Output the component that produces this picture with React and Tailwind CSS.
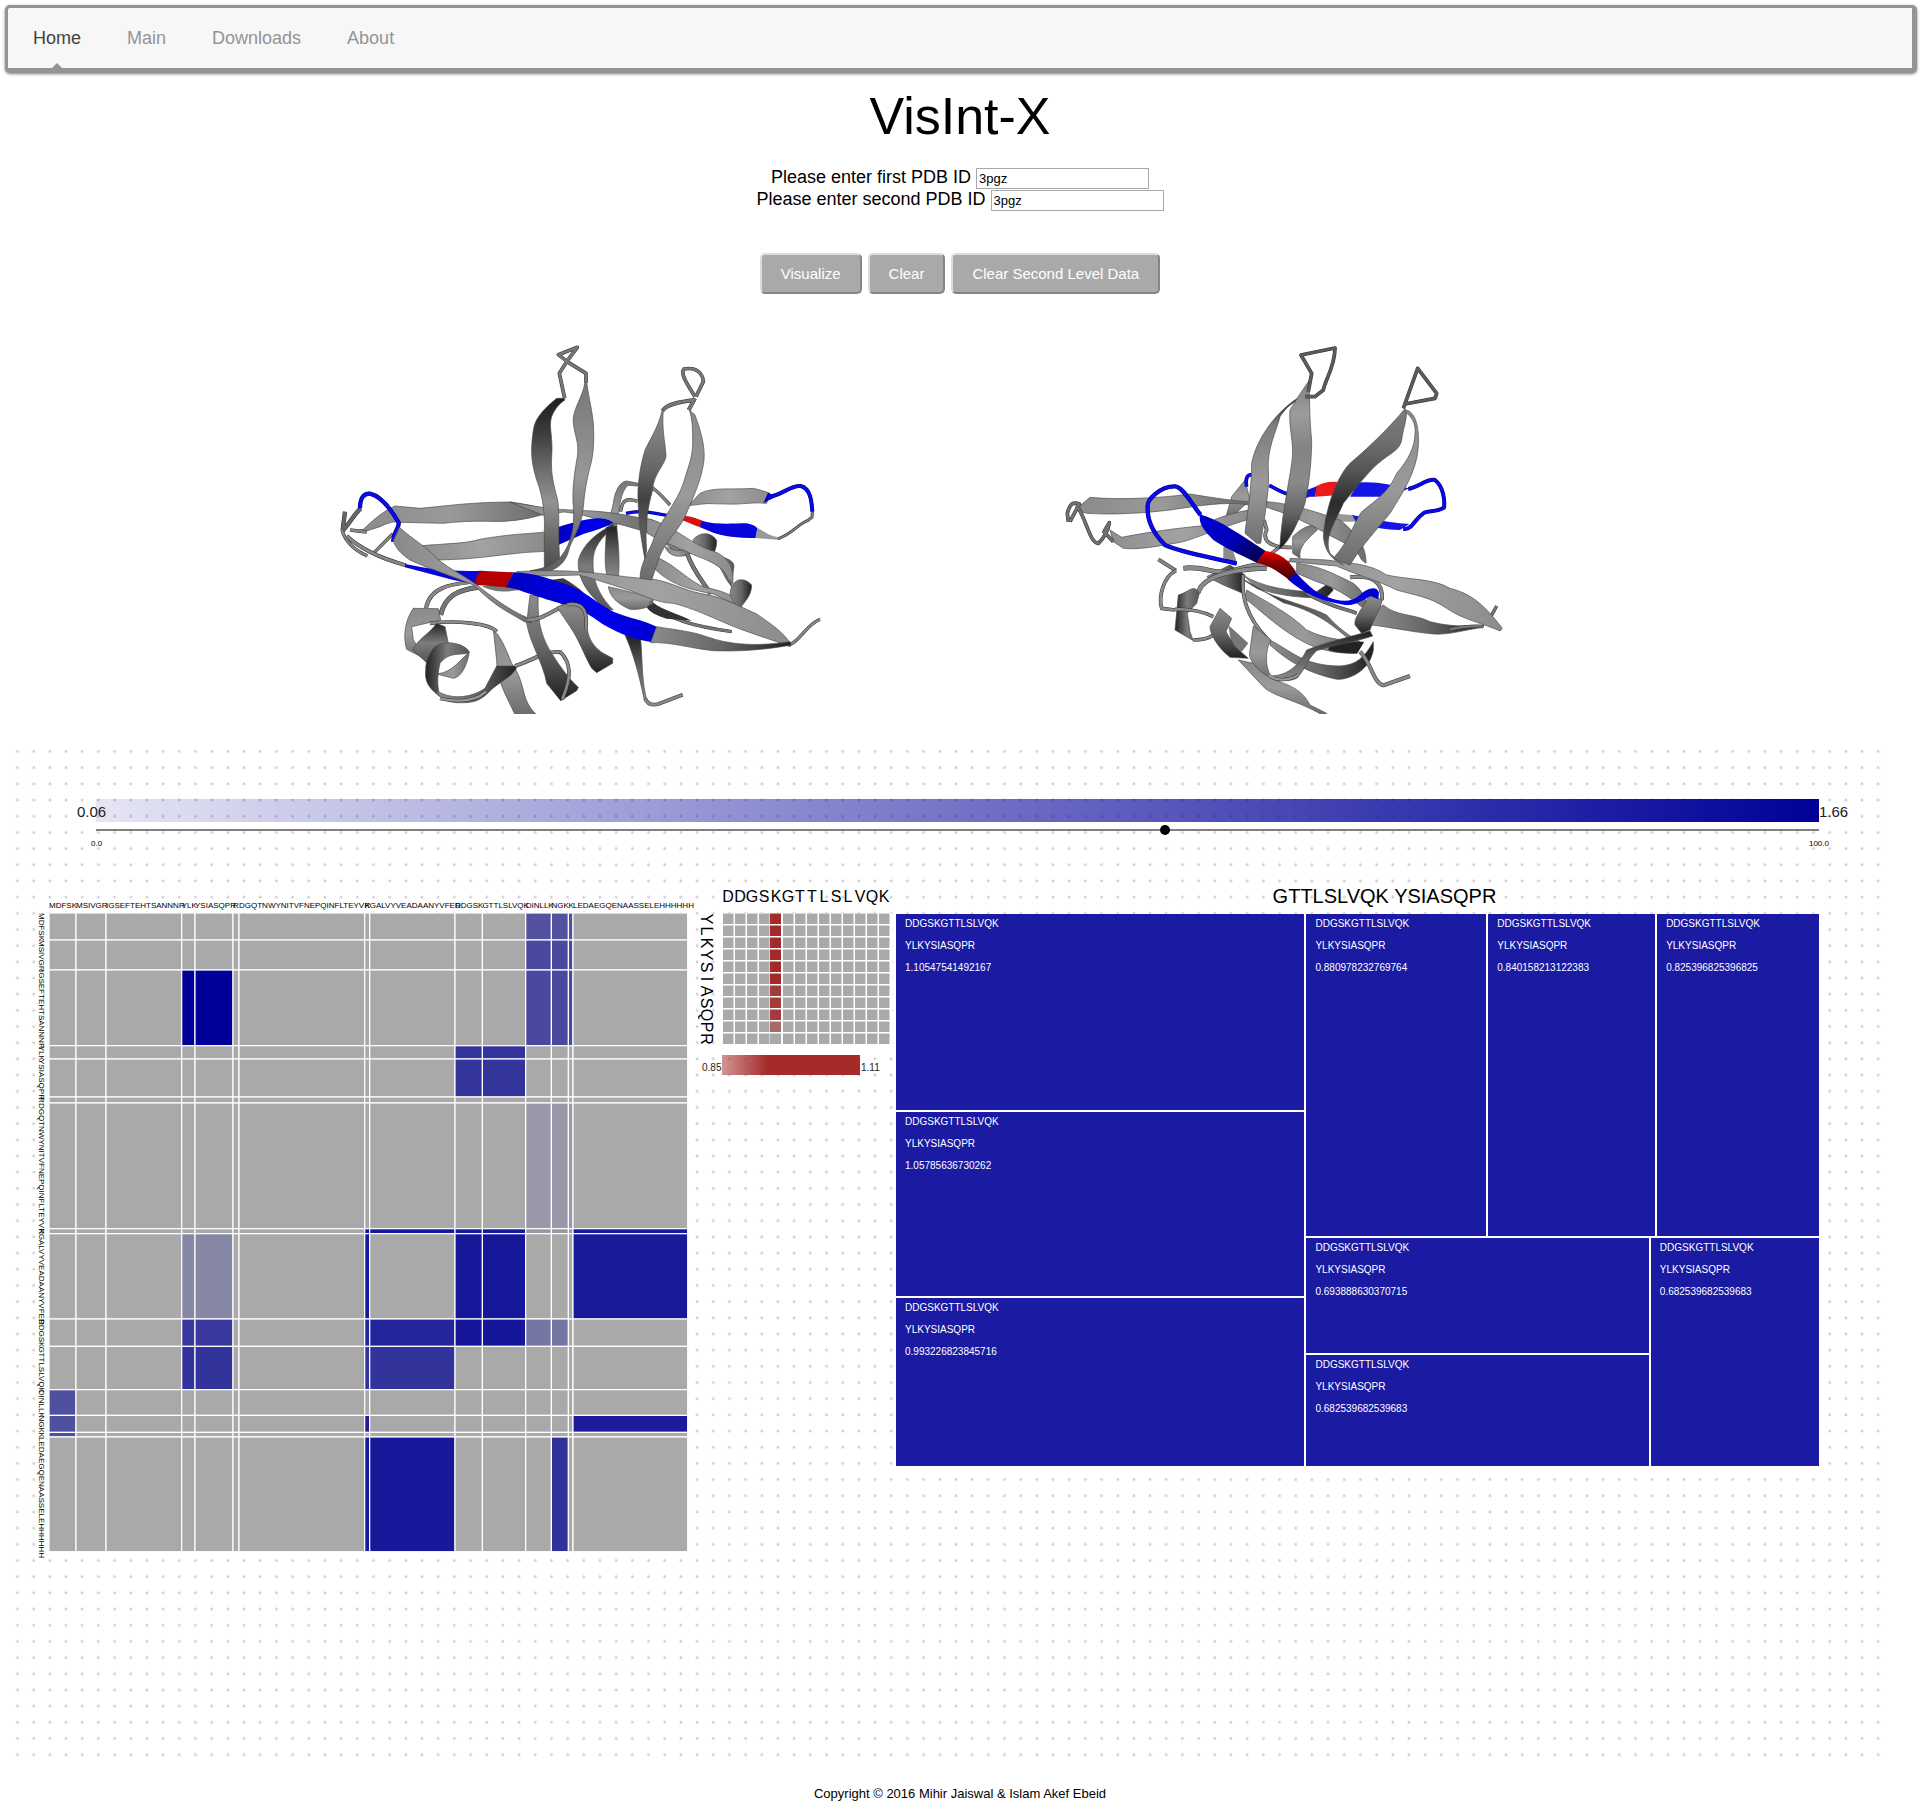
import { useState } from 'react';

const NAV = ['Home', 'Main', 'Downloads', 'About'];

/* ---------- peptide contact matrix ---------- */

const PEPTIDES = [
  'MDFSK', 'MSIVGR', 'IGSEFTEHTSANNNR', 'YLK', 'YSIASQPR', 'R', 'DGQTNWYNITVFNEPQINFLTEYVR', 'K',
  'GALVYVEADAANYVFER', 'DDGSK', 'GTTLSLVQK', 'DINLLK', 'NGK', 'K', 'LEDAEGQENAASSELEHHHHHH',
];
const EDGES = [0, 27, 57, 132.7, 146, 184, 190, 315.7, 320.7, 406, 433.4, 476.7, 502.4, 519.4, 524, 638.7];

// row -> { column: colour }
const CONTACTS = {
  0: { 11: '#5252a0', 12: '#5252a0', 13: '#5252a0' },
  1: { 11: '#49499f', 12: '#49499f', 13: '#49499f' },
  2: { 3: '#000099', 4: '#000099', 11: '#49499f', 12: '#49499f', 13: '#49499f' },
  3: { 9: '#34349d', 10: '#34349d' },
  4: { 9: '#34349d', 10: '#34349d' },
  6: { 11: '#9a98a8', 12: '#9a98a8', 13: '#9a98a8' },
  7: { 7: '#17179a', 8: '#17179a', 9: '#17179a', 10: '#17179a', 11: '#9a98a8', 12: '#9a98a8', 13: '#9a98a8', 14: '#19199a' },
  8: { 3: '#8686a5', 4: '#8686a5', 7: '#17179a', 9: '#17179a', 10: '#17179a', 14: '#19199a' },
  9: { 3: '#38389d', 4: '#38389d', 7: '#25259b', 8: '#25259b', 9: '#16169a', 10: '#16169a', 11: '#7676a5', 12: '#7676a5' },
  10: { 3: '#33339c', 4: '#33339c', 7: '#33339c', 8: '#33339c' },
  11: { 0: '#5050a0' },
  12: { 0: '#5050a0', 7: '#1c1c9a', 14: '#1c1c9a' },
  13: { 0: '#5050a0' },
  14: { 7: '#17179a', 8: '#17179a', 12: '#31319b' },
};

function PeptideMatrix() {
  return (
    <svg className="block shrink-0" width="664" height="684" role="img" aria-label="Peptide contact matrix">
      <g fontSize="8" fill="#000">
        {PEPTIDES.map((p, i) => (
          <text key={i} x={15 + EDGES[i]} y="24">{p}</text>
        ))}
        {PEPTIDES.map((p, i) => (
          <text key={i} transform={`translate(5 ${29 + EDGES[i]}) rotate(90)`}>{p}</text>
        ))}
      </g>
      <g transform="translate(15 29)" stroke="#fff" strokeWidth="1.2">
        {PEPTIDES.map((_, r) =>
          PEPTIDES.map((_, c) => (
            <rect
              key={`${r}-${c}`}
              x={EDGES[c]}
              y={EDGES[r]}
              width={EDGES[c + 1] - EDGES[c]}
              height={EDGES[r + 1] - EDGES[r]}
              fill={(CONTACTS[r] && CONTACTS[r][c]) || '#a9a9a9'}
            />
          ))
        )}
      </g>
    </svg>
  );
}

/* ---------- residue matrix ---------- */

const COLS = 'DDGSKGTTLSLVQK'.split('');
const ROWS = 'YLKYSIASQPR'.split('');
const RED = ['#a52a2a', '#a52a2a', '#a52a2a', '#a52a2a', '#a52a2a', '#a52a2a', '#a53a3a', '#a53a3a', '#a53a3a', '#a76a6a', '#a9a9a9'];

function ResidueMatrix() {
  return (
    <svg className="block shrink-0" width="195" height="200" role="img" aria-label="Residue contact matrix">
      <defs>
        <linearGradient id="brown">
          <stop offset="0" stopColor="#a52a2a" stopOpacity="0.5" />
          <stop offset="0.33" stopColor="#a52a2a" />
        </linearGradient>
      </defs>
      <g fontSize="16" fill="#000" textAnchor="middle">
        {COLS.map((l, i) => (
          <text key={i} x={30 + i * 12} y="18">{l}</text>
        ))}
        {ROWS.map((l, i) => (
          <text key={i} transform={`translate(3 ${35 + i * 12}) rotate(90)`}>{l}</text>
        ))}
      </g>
      <rect x="24" y="29" width="170" height="133" fill="#fff" />
      {ROWS.map((_, r) =>
        COLS.map((_, c) => (
          <rect
            key={`${r}-${c}`}
            x={25 + c * 12 - (c === 4 ? 1 : 0)}
            y={r * 12 + 29.5}
            width={c === 4 ? 11 : 10.5}
            height="10.5"
            fill={c === 4 ? RED[r] : '#a9a9a9'}
          />
        ))
      )}
      <rect x="24" y="171" width="138" height="20" fill="url(#brown)" />
      <g fontSize="10" fill="#222">
        <text x="4" y="187">0.85</text>
        <text x="163" y="187">1.11</text>
      </g>
    </svg>
  );
}

/* ---------- treemap ---------- */

function Tile({ value, className }) {
  return (
    <div className={`flex min-w-0 flex-col gap-[10px] bg-[#1a1aa3] pt-[4px] pl-[9px] text-[10px] leading-[12px] text-white ${className}`}>
      <span>DDGSKGTTLSLVQK</span>
      <span>YLKYSIASQPR</span>
      <span>{value}</span>
    </div>
  );
}

function Treemap() {
  return (
    <section className="mr-[67px] ml-[3px] min-w-0 flex-1">
      <h2 className="pl-[54px] text-center text-[20px] leading-[24px]">GTTLSLVQK YSIASQPR</h2>
      <div className="mt-[6px] flex h-[552px] gap-[2px] bg-white">
        <div className="flex flex-[408] flex-col gap-[2px]">
          <Tile value="1.10547541492167" className="flex-[192]" />
          <Tile value="1.05785636730262" className="flex-[180]" />
          <Tile value="0.993226823845716" className="flex-[164]" />
        </div>
        <div className="flex flex-[512] flex-col gap-[2px]">
          <div className="flex flex-[322] gap-[2px]">
            <Tile value="0.880978232769764" className="flex-[171]" />
            <Tile value="0.840158213122383" className="flex-[158]" />
            <Tile value="0.825396825396825" className="flex-[153]" />
          </div>
          <div className="flex flex-[228] gap-[2px]">
            <div className="flex flex-[342] flex-col gap-[2px]">
              <Tile value="0.693888630370715" className="flex-[111]" />
              <Tile value="0.682539682539683" className="flex-[107]" />
            </div>
            <Tile value="0.682539682539683" className="flex-[159]" />
          </div>
        </div>
      </div>
    </section>
  );
}

/* ---------- protein ribbons ---------- */

function Shades() {
  const stops = {
    mid: ['#8a8a8a', '#9a9a9a', '#6c6c6c'],
    light: ['#8e8e8e', '#a2a2a2', '#8c8c8c'],
    sink: ['#8c8c8c', '#666666', '#202020'],
    rise: ['#1e1e1e', '#606060', '#8c8c8c'],
    tall: ['#222222', '#7c7c7c', '#555555'],
    pale: ['#777777', '#989898', '#5c5c5c'],
    arm: ['#1c1c1c', '#3c3c3c', '#6a6a6a', '#929292', '#6a6a6a', '#4c4c4c'],
    waist: ['#8a8a8a', '#7c7c7c', '#666666', '#424242', '#5c5c5c', '#505050'],
    foot: ['#808080', '#9c9c9c', '#848484', '#8a8a8a', '#606060', '#141414'],
    bend: ['#7c7c7c', '#707070', '#545454', '#2c2c2c', '#444444', '#8a8a8a'],
    stem: ['#1c1c1c', '#7c7c7c', '#8c8c8c', '#9a9a9a', '#868686', '#707070'],
  };
  return (
    <defs>
      {Object.entries(stops).map(([id, cs]) =>
        ['v', 'h'].map((dir) => (
          <linearGradient key={id + dir} id={id + dir} x1="0" y1="0" x2={dir === 'h' ? '1' : '0'} y2={dir === 'v' ? '1' : '0'}>
            {cs.map((c, i) => (
              <stop key={i} offset={i / (cs.length - 1)} stopColor={c} />
            ))}
          </linearGradient>
        ))
      )}
      <linearGradient id="blueh">
        <stop offset="0" stopColor="#0000c0" />
        <stop offset="0.6" stopColor="#0000f0" />
        <stop offset="1" stopColor="#0000d0" />
      </linearGradient>
      <linearGradient id="bluedark" x1="0" y1="0" x2="1" y2="0.6">
        <stop offset="0" stopColor="#0000d8" />
        <stop offset="0.6" stopColor="#0000b8" />
        <stop offset="1" stopColor="#000060" />
      </linearGradient>
      <linearGradient id="reddark" x1="0.4" y1="0" x2="0.3" y2="1">
        <stop offset="0" stopColor="#ff0000" />
        <stop offset="0.4" stopColor="#8a0000" />
        <stop offset="1" stopColor="#400000" />
      </linearGradient>
    </defs>
  );
}

const BLUE = '#0a0ae6';

// [path, fill] is a flat ribbon; [path, colour, width] is a thin tube
function Ribbons({ parts }) {
  return parts.map(([d, paint, width], i) =>
    width ? (
      <g key={i} fill="none" strokeLinejoin="round">
        <path d={d} stroke={paint === BLUE ? '#000080' : '#333'} strokeWidth={width + 2} />
        <path d={d} stroke={paint} strokeWidth={width - 1} />
      </g>
    ) : (
      <path key={i} d={d} fill={paint} stroke={paint.startsWith('url(#') && !/blue|red/.test(paint) ? '#4a4a4a' : 'none'} strokeWidth="2" />
    )
  );
}

const LEFT = [
  ['M830,640 C832,590 840,560 850,520 C855,480 870,455 890,453 L925,460 L922,468 L895,466 C875,480 868,520 860,590Z', 'url(#palev)'],
  ['M872,545 C876,510 890,503 922,514', '#858585', 8],
  ['M965,472 C990,488 1005,510 1020,525', '#858585', 8],
  ['M850,582 C800,610 760,640 745,690 C740,750 780,800 830,838 L850,840 C800,790 785,740 790,680 C795,640 830,610 850,592Z', 'url(#tallv)'],
  ['M828,592 L860,588 C865,640 870,690 865,745 L830,735 C820,680 830,640 828,592Z', 'url(#risev)'],
  ['M835,770 C840,800 860,820 900,838 C940,840 965,830 970,810 L950,800 C920,790 880,780 835,770Z', 'url(#midv)'],
  ['M960,570 C1000,620 1010,660 1080,672', '#858585', 9],
  ['M1005,650 C1015,680 1050,685 1080,672 L1075,660 L1040,662Z', 'url(#midh)'],
  ['M1090,628 C1110,605 1145,605 1160,632 C1160,660 1150,675 1135,682 L1090,655Z', 'url(#sinkh)'],
  ['M1150,675 C1180,680 1212,690 1212,708 C1208,740 1205,750 1205,770 L1190,750Z', 'url(#tallh)'],
  ['M1072,672 C1090,725 1120,755 1142,792', '#787878', 11],
  ['M980,682 C1040,705 1090,770 1140,775 C1180,785 1230,800 1234,832 L1150,792 C1090,780 1030,770 975,718Z', 'url(#lighth)'],
  ['M1200,790 C1205,745 1240,738 1265,765 C1264,800 1245,812 1230,836 L1208,812Z', 'url(#sinkh)'],
  ['M960,815 C1010,870 1100,890 1205,905', '#777', 8],
  ['M970,820 C1000,840 1040,850 1085,872 L1010,866 C980,856 955,845 950,830Z', '#333'],
  // upper left strand
  ['M75,603 L100,598 C140,560 160,545 195,528 L270,535 L400,522 Q470,516 540,516 Q590,522 645,537 L645,552 Q560,578 480,574 Q400,572 340,580 L210,577 Q190,570 150,590 L100,606Z', 'url(#midh)'],
  ['M540,516 C600,525 640,536 720,540 C790,542 850,545 950,568 L960,610 C900,590 860,580 820,572 C780,562 740,548 700,546 L640,556Z', 'url(#midh)'],
  ['M950,565 C1020,580 1080,640 1140,660 C1190,675 1215,710 1208,760 L1195,748 C1180,705 1130,690 1080,670 C1040,648 1000,640 950,608Z', 'url(#lighth)'],
  // lower left strand
  ['M265,648 C350,640 400,642 450,628 C550,610 600,612 645,606 L645,664 C560,666 480,682 400,687 L325,690Z', 'url(#lighth)'],
  ['M683,592 C720,580 760,568 800,565 C830,565 840,572 850,578 C830,590 800,600 760,612 L683,646Z', 'url(#blueh)'],
  ['M888,550 C930,540 960,545 1050,564', BLUE, 8],
  ['M1045,555 C1080,558 1100,565 1117,572 L1111,592 C1090,585 1070,575 1045,566Z', '#d81010'],
  ['M1115,572 C1160,585 1200,580 1250,580 Q1275,585 1282,595 L1278,624 C1220,624 1180,618 1150,608 L1110,592Z', '#0606dc'],
  ['M1282,593 C1310,610 1330,625 1355,620 L1350,630 L1276,624Z', '#999'],
  ['M1345,626 C1390,610 1400,585 1432,572 L1446,562 L1447,545', '#7c7c7c', 7],
  ['M1075,527 L1110,490 C1150,470 1200,480 1270,475 Q1300,482 1320,490 L1310,520 C1270,515 1230,525 1190,522 Q1130,517 1075,527Z', 'url(#lighth)'],
  ['M1300,519 L1314,488 L1338,500Z', '#0000c0'],
  ['M1315,500 C1350,500 1380,465 1412,468 C1440,475 1445,510 1447,545', BLUE, 10],
  // left knot
  ['M45,545 L38,600 M92,535 C70,555 60,580 38,602', '#666', 11],
  ['M36,600 Q50,650 112,678', '#888', 8],
  ['M60,600 L110,606', '#888', 9],
  ['M130,670 Q160,640 188,612', '#888', 8],
  ['M50,618 C100,665 170,690 228,706', '#888', 10],
  ['M90,535 C90,505 100,490 120,491 C160,500 190,550 206,578 C208,600 188,605 190,635', BLUE, 11],
  // helix, lower left
  ['M430,755 C370,762 300,768 288,834', '#8a8a8a', 10],
  ['M445,772 C380,780 345,800 332,855', '#777', 13],
  ['M250,835 L325,836 L332,870 L245,890 L250,930 L292,990 L230,958 C218,920 225,870 250,835Z', 'url(#midv)'],
  ['M490,900 C510,915 525,950 545,1000 C590,1060 570,1110 620,1154 L555,1154 C525,1090 500,1050 500,990Z', 'url(#midv)'],
  ['M300,880 C380,870 480,880 500,905', '#8a8a8a', 9],
  ['M320,880 L345,890 L355,940 C330,950 310,960 290,998 L248,960 C260,930 300,910 320,880Z', 'url(#tallv)'],
  ['M418,966 C412,1000 398,1040 370,1045 L320,1032 L340,1028 C375,1015 390,990 418,966Z', 'url(#midh)'],
  ['M310,955 C340,925 405,940 418,966 C400,980 360,960 330,1000 C318,1050 325,1080 330,1100 C290,1070 285,1050 287,1020 C287,990 300,970 310,955Z', 'url(#tallh)'],
  ['M320,1082 C360,1108 420,1106 465,1075 L500,1008 L562,1008 C552,1040 500,1060 478,1085 C450,1113 430,1120 380,1118 C345,1115 328,1105 320,1082Z', 'url(#sinkh)'],
  ['M330,1106 C400,1120 440,1110 468,1085', '#9a9a9a', 8],
  ['M555,1008 C610,990 650,960 692,967', '#888', 10],
  // ribbons under the long strand
  ['M600,795 L625,798 C620,880 640,930 665,970 C690,1010 720,1050 745,1072 L740,1082 L692,1112 L650,1060 C640,1000 600,940 590,880Z', 'url(#sinkv)'],
  ['M690,965 C725,1000 725,1040 697,1108', '#8a8a8a', 9],
  ['M660,750 L700,745 C780,790 790,830 840,850 L820,860 C780,840 740,850 680,815Z', '#3c3c3c'],
  ['M885,915 L932,928 C938,1000 935,1060 952,1114 L943,1112 C925,1020 905,960 885,915Z', 'url(#risev)'],
  ['M946,1106 Q955,1130 985,1122 L1058,1094', '#888', 9],
  // blue / red strand
  ['M225,702 C300,718 370,725 455,722 L445,765 L370,750 L225,712Z', '#0606dc'],
  ['M455,768 C500,792 540,785 580,778 L530,768Z', '#777'],
  // tall pair
  ['M702,205 L680,205 C650,230 615,260 610,300 C600,370 605,400 620,450 C640,500 645,560 643,600 L643,722 L690,702 C683,620 690,560 683,510 C670,460 662,430 665,380 C670,320 655,290 665,260 C675,235 690,220 705,210Z', 'url(#armv)'],
  ['M765,155 C760,200 725,240 730,280 C735,320 748,340 742,380 C735,420 725,480 730,530 C735,600 720,640 700,670 C680,700 650,715 600,722 L650,726 C700,712 712,680 718,655 C730,620 755,590 760,530 C765,470 775,430 783,400 C790,370 793,340 790,280 C785,230 775,200 770,155Z', 'url(#palev)'],
  ['M704,205 L688,130 L715,88 L742,52 L685,74 L715,97 L768,130 L768,158', '#777', 9],
  ['M560,725 C640,720 700,722 745,725 C830,730 900,745 950,745 C1010,750 1060,780 1110,790 C1180,800 1240,835 1280,852 C1320,880 1360,905 1385,945 L1380,950 C1330,930 1260,910 1200,885 C1140,860 1090,835 1030,820 C980,820 930,790 880,775 C830,760 790,745 745,735 L640,738 L560,735Z', 'url(#lighth)'],
  ['M453,722 L550,727 L530,772 L440,765 C430,750 440,735 453,722Z', '#b40000'],
  ['M550,727 C620,730 650,745 700,760 C770,785 800,820 850,845 C900,865 940,870 980,890 L963,936 C900,925 850,905 800,870 C740,825 680,820 640,805 C590,790 560,775 528,772Z', 'url(#blueh)'],
  ['M980,890 C1040,900 1090,905 1130,920 C1200,945 1280,950 1380,935 L1385,945 C1300,960 1230,965 1150,962 C1080,955 1020,935 962,938Z', 'url(#sinkh)'],
  ['M1383,942 C1410,930 1430,885 1470,868', '#888', 8],
  ['M208,592 C250,630 290,650 320,685 C360,720 420,745 460,780 C510,820 560,850 590,862 L605,878 L585,876 L540,850 C470,810 440,770 430,765 C360,735 300,718 240,690 C210,670 195,650 190,632Z', 'url(#midh)'],
  ['M590,870 C650,870 680,825 730,822', '#888', 10],
  ['M680,832 C700,820 765,810 772,860 C765,920 790,950 820,970 L848,985 L848,1000 L800,1028 L785,1015 C765,980 745,925 720,890 C700,860 690,845 680,832Z', 'url(#sinkv)'],
  ['M712,824 C765,815 772,850 768,900', '#8a8a8a', 9],
  // second tall pair
  ['M1095,200 C1070,160 1050,130 1062,117 C1100,110 1118,130 1120,155 L1098,200', '#777', 9],
  ['M1095,210 C1050,215 1010,222 998,242 M1095,205 L1076,240', '#777', 10],
  ['M998,235 C985,290 970,310 945,360 C930,410 920,470 925,530 C928,600 938,650 945,690 L950,660 C945,600 950,540 968,480 C970,430 1010,400 1008,375 C1005,330 995,300 1000,240Z', 'url(#waistv)'],
  ['M1078,240 L1095,255 C1115,310 1125,350 1122,390 C1115,450 1090,500 1065,560 C1040,610 1000,640 985,690 L965,750 L930,745 C930,700 960,660 970,630 C985,580 1040,520 1060,460 C1075,410 1088,380 1088,340 C1088,300 1088,270 1078,240Z', 'url(#midv)'],
];

const RIGHT = [
  ['M585,450 L545,500 L528,560 L560,548 L600,510Z', 'url(#midv)'],
  ['M590,470 C585,440 595,432 606,436', BLUE, 9],
  ['M658,466 C700,490 720,500 775,497', BLUE, 9],
  ['M765,482 L802,468 L795,500 L715,502Z', '#1414d8'],
  ['M800,468 C830,453 850,453 882,460 L870,495 L795,500Z', '#ee1a1a'],
  ['M925,458 C980,453 1020,465 1078,475 L1020,500 L900,500Z', '#1616e4'],
  ['M1075,477 C1110,470 1130,445 1155,450 C1180,470 1185,510 1182,533 C1160,548 1130,540 1120,550 C1090,570 1090,598 1060,597', BLUE, 10],
  ['M905,555 L960,565 C1000,575 1040,580 1078,582 L1050,600 C1000,600 950,590 915,574Z', '#1616e4'],
  ['M840,550 L905,555 L918,575 L850,575Z', '#999'],
  ['M650,515 C720,520 780,540 870,570 C920,610 950,650 948,700 L935,690 C920,650 870,635 820,605 C780,585 740,560 650,532Z', 'url(#midh)'],
  ['M642,570 L650,600 C635,630 660,655 725,652', '#8a8a8a', 9],
  ['M728,620 C760,590 790,575 802,600 C770,630 745,650 750,685 L728,670Z', 'url(#palev)'],
  ['M520,650 L545,650 L560,695 L520,685Z', '#8c8c8c'],
  // left strands
  ['M75,540 L120,502 C200,510 330,505 420,492 C470,500 530,510 595,516 L595,525 C530,512 430,530 360,540 C280,550 180,555 110,550Z', 'url(#midh)'],
  ['M180,600 L215,622 C300,605 380,595 450,588 C510,560 560,545 600,540 L590,570 C520,590 450,620 400,635 C320,650 260,660 220,655 L190,635Z', 'url(#lighth)'],
  ['M55,575 L52,550 C60,520 70,515 88,522 L60,575 M80,525 C110,570 120,640 145,640 C165,620 175,600 178,578 L162,605 L190,635', '#707070', 9],
  // lower cluster
  ['M325,688 L378,722', '#888', 9],
  ['M470,740 L540,705 L585,735 L578,790 L520,765Z', 'url(#sinkh)'],
  ['M400,715 C450,705 500,735 540,725 C600,705 640,700 720,700', '#8a8a8a', 13],
  ['M378,722 C340,740 325,800 335,835 L375,840', '#8a8a8a', 9],
  ['M580,735 C630,770 720,785 800,785 L835,760 L850,780 L830,802 C760,805 700,800 620,775Z', 'url(#sinkh)'],
  ['M575,745 C640,800 760,820 830,855 C860,890 900,920 930,935 L920,945 C860,900 820,850 700,818Z', 'url(#risev)'],
  ['M740,700 C800,705 850,730 910,760 C950,790 960,840 940,835 C900,800 850,770 800,755 L740,730Z', 'url(#midh)'],
  ['M770,790 C840,830 880,835 920,850', '#777', 9],
  ['M590,780 C640,810 720,850 770,900 C830,930 890,930 940,938 L920,970 C860,972 800,958 760,935 C700,905 640,850 585,805Z', 'url(#midh)'],
  ['M840,940 C880,940 910,935 942,935 L922,970 C890,970 860,968 835,960Z', '#222'],
  ['M660,930 C720,960 760,1008 870,1008 C920,1005 945,980 970,935 L970,960 C960,1020 900,1050 860,1048 C780,1030 720,1000 660,945Z', 'url(#sinkh)'],
  ['M580,735 C573,800 590,860 650,925', '#8a8a8a', 9],
  ['M650,715 C520,718 450,750 445,790', '#8a8a8a', 12],
  ['M385,795 C420,785 430,760 448,790 L440,820 L412,850 L420,905 L430,932 L375,900Z', 'url(#tallh)'],
  ['M430,930 Q470,930 490,915 M375,838 Q440,835 490,860', '#8a8a8a', 9],
  ['M535,885 L595,940 L575,965 L545,950Z', '#777'],
  ['M510,835 L545,865 L528,905 L555,950 L595,985 L540,982 C500,950 480,910 480,890Z', 'url(#sinkv)'],
  ['M565,990 L610,1000 C660,1070 740,1045 780,1125 L830,1150 L815,1154 C740,1110 670,1100 640,1070Z', 'url(#midv)'],
  ['M610,888 L662,928 C640,980 650,1020 668,1047 C620,1020 592,990 600,960Z', 'url(#midv)'],
  ['M665,1038 C720,1035 750,1000 770,960 C820,940 900,920 960,903 L968,918 C900,940 850,945 800,962 C770,990 765,1020 740,1045 C710,1057 690,1052 665,1038Z', 'url(#risev)'],
  ['M655,1035 C680,1055 715,1052 745,1035', '#999', 8],
  ['M930,965 C965,1000 970,1060 1000,1066 L1080,1038', '#888', 10],
  // right strands
  ['M1000,825 C1040,860 1090,850 1140,875 C1200,890 1250,890 1300,885 L1300,892 C1240,900 1200,915 1150,912 C1080,905 1010,890 965,885 L975,840Z', 'url(#sinkh)'],
  ['M1200,898 C1240,890 1270,885 1300,890 M1318,868 L1340,828', '#777', 8],
  ['M900,742 C960,735 1000,750 996,810', '#8a8a8a', 10],
  ['M720,685 L830,690 C900,700 960,700 1010,735 C1080,750 1150,745 1200,775 C1260,790 1300,820 1357,895 L1350,903 C1300,880 1240,870 1190,835 C1140,800 1090,795 1040,780 C980,750 920,735 860,708 L720,695Z', 'url(#lighth)'],
  ['M985,805 L955,798 C945,830 910,860 915,885 L935,910 L960,900 C970,870 990,840 997,810Z', 'url(#sinkv)'],
  ['M690,650 L640,690', '#8a8a8a', 8],
  // tall pair
  ['M760,195 C690,230 620,320 605,400 C605,480 590,560 585,610 L620,640 L632,640 C640,580 660,480 655,420 C650,360 680,300 690,260 C710,230 730,215 762,200Z', 'url(#stemv)'],
  ['M775,155 L748,195 L720,240 C715,300 735,340 725,400 C715,470 695,560 690,645 L685,658 C720,640 750,560 765,520 C780,450 785,380 785,330 C780,280 778,230 778,150Z', 'url(#footv)'],
  ['M775,185 L785,130 L753,75 L855,54 C855,110 825,150 820,180 L795,200 L765,200', '#5c5c5c', 9],
  ['M1063,238 C1030,280 960,350 900,400 C860,440 825,540 820,620 C825,670 850,690 880,705 L840,670 C820,620 860,570 880,520 C920,470 960,420 985,400 C1020,370 1050,360 1055,330 C1060,290 1075,260 1067,238Z', 'url(#bendv)'],
  ['M1070,240 C1100,250 1108,300 1105,350 C1100,430 1050,500 1020,550 C980,600 940,640 900,705 L850,685 C900,630 910,580 935,545 C980,510 1020,480 1040,430 C1075,390 1095,350 1095,310 C1098,280 1085,260 1065,245Z', 'url(#midv)'],
  ['M1060,235 L1103,115 L1160,190 L1155,205 L1065,222', '#5c5c5c', 9],
  // blue / red strand
  ['M452,555 C430,530 400,470 375,469 C330,468 290,510 293,530 C290,580 320,620 345,645 C400,670 500,685 560,701', BLUE, 11],
  ['M450,553 C520,575 570,615 648,664 L620,698 C560,670 520,650 490,630 C460,600 445,580 450,553Z', 'url(#bluedark)'],
  ['M735,725 C770,760 790,785 830,800 C870,815 900,820 930,795 C950,775 980,765 987,788 L985,808 L962,798 C930,815 910,830 880,824 C830,815 790,800 765,785 C740,770 720,755 712,746Z', 'url(#blueh)'],
  ['M645,663 C690,668 715,690 738,725 L715,748 C690,730 660,705 618,698Z', 'url(#reddark)'],
];

function Protein({ parts, width, label }) {
  return (
    <svg className="block shrink-0" width={width} height="384" viewBox={`0 0 ${width * 3} 1152`} role="img" aria-label={label}>
      <Ribbons parts={parts} />
    </svg>
  );
}

/* ---------- page ---------- */

function IdField({ id, label, value, onChange }) {
  return (
    <div className="flex h-[22px] items-start justify-center gap-[5px]">
      <label htmlFor={id} className="text-[18px] leading-[18px]">{label}</label>
      <input
        id={id}
        type="text"
        value={value}
        onChange={(e) => onChange(e.target.value)}
        className="h-[21px] w-[173px] border border-[#a9a9a9] bg-white px-[2px] text-[13px]"
      />
    </div>
  );
}

export default function App() {
  const [first, setFirst] = useState('3pgz');
  const [second, setSecond] = useState('3pgz');
  const [level, setLevel] = useState(62.1);

  return (
    <div className="flow-root min-h-screen bg-white font-['Liberation_Sans',Arial,sans-serif] text-black">
      <svg width="0" height="0" className="absolute" aria-hidden="true"><Shades /></svg>

      <nav className="mt-[5px] mr-[3px] ml-[5px] flex h-[68px] gap-[46px] rounded-[5px] border-t-[3px] border-r-[5px] border-b-[5px] border-l-[3px] border-[#949494] bg-[#f7f7f7] pl-[25px] shadow-[0_1px_3px_rgba(0,0,0,0.5)]">
        {NAV.map((item, i) => (
          <a key={item} href="#" className={`relative text-[18px] leading-[60px] ${i === 0 ? 'text-[#404040]' : 'text-[#949494]'}`}>
            {item}
            {i === 0 && (
              <svg className="absolute bottom-0 left-1/2 -translate-x-1/2" width="10" height="5" aria-hidden="true">
                <path d="M0 5 5 0l5 5z" fill="#949494" />
              </svg>
            )}
          </a>
        ))}
      </nav>

      <h1 className="mt-[8px] text-center text-[52px] leading-[70px]">VisInt-X</h1>

      <form className="mt-[17px]" onSubmit={(e) => e.preventDefault()}>
        <IdField id="first" label="Please enter first PDB ID" value={first} onChange={setFirst} />
        <IdField id="second" label="Please enter second PDB ID" value={second} onChange={setSecond} />
        <div className="mt-[41px] flex justify-center gap-[6px]">
          {['Visualize', 'Clear', 'Clear Second Level Data'].map((t) => (
            <button
              key={t}
              type="button"
              className="h-[41px] rounded-[5px] border-2 border-t-[#dcdcdc] border-r-[#868686] border-b-[#868686] border-l-[#dcdcdc] bg-[#a9a9a9] px-[19px] pt-[2px] text-[15px] text-white"
            >
              {t}
            </button>
          ))}
        </div>
      </form>

      <div className="mt-[36px] flex justify-center gap-[220px] pr-[70px]">
        <Protein parts={LEFT} width={500} label="First protein structure" />
        <Protein parts={RIGHT} width={470} label="Second protein structure" />
      </div>

      <main className="relative mt-[29px] mr-[34px] ml-[9px] min-h-[1020px]">
        <svg className="absolute inset-0 h-full w-full" aria-hidden="true">
          <defs>
            <pattern id="dots" width="16.18" height="16.18" patternUnits="userSpaceOnUse">
              <path d="M7 8.5h3M8.5 7v3" stroke="#b8b8b8" strokeWidth="1" opacity="0.85" />
            </pattern>
          </defs>
          <rect width="100%" height="100%" fill="url(#dots)" />
        </svg>

        <div className="relative pt-[56px]">
          <div className="mr-[67px] ml-[87px]">
            <div className="relative h-[23px] bg-linear-to-r/srgb from-[#000099]/10 to-[#000099]">
              <span className="absolute top-0 -left-[19px] text-[15px] leading-[26px] text-[#222]">0.06</span>
              <span className="absolute top-0 left-full text-[15px] leading-[26px] text-[#222]">1.66</span>
            </div>
            <input
              type="range"
              min="0"
              max="100"
              step="0.1"
              value={level}
              aria-label="Threshold"
              onChange={(e) => setLevel(e.target.value)}
              className="mt-[2px] block h-[12px] w-full appearance-none bg-transparent [&::-webkit-slider-runnable-track]:h-[2px] [&::-webkit-slider-runnable-track]:bg-[#808080] [&::-webkit-slider-thumb]:-mt-[4px] [&::-webkit-slider-thumb]:h-[10px] [&::-webkit-slider-thumb]:w-[10px] [&::-webkit-slider-thumb]:appearance-none [&::-webkit-slider-thumb]:rounded-full [&::-webkit-slider-thumb]:bg-black"
            />
            <div className="-mr-[10px] -ml-[5px] flex justify-between pt-[2px] text-[8px] leading-[12px]">
              <span>0.0</span>
              <span>100.0</span>
            </div>
          </div>

          <div className="mt-[34px] ml-[25px] flex items-start">
            <PeptideMatrix />
            <ResidueMatrix />
            <Treemap />
          </div>
        </div>
      </main>

      <footer className="mt-[20px] text-center text-[13px] leading-[22px]">
        Copyright © 2016 Mihir Jaiswal &amp; Islam Akef Ebeid
      </footer>
    </div>
  );
}
